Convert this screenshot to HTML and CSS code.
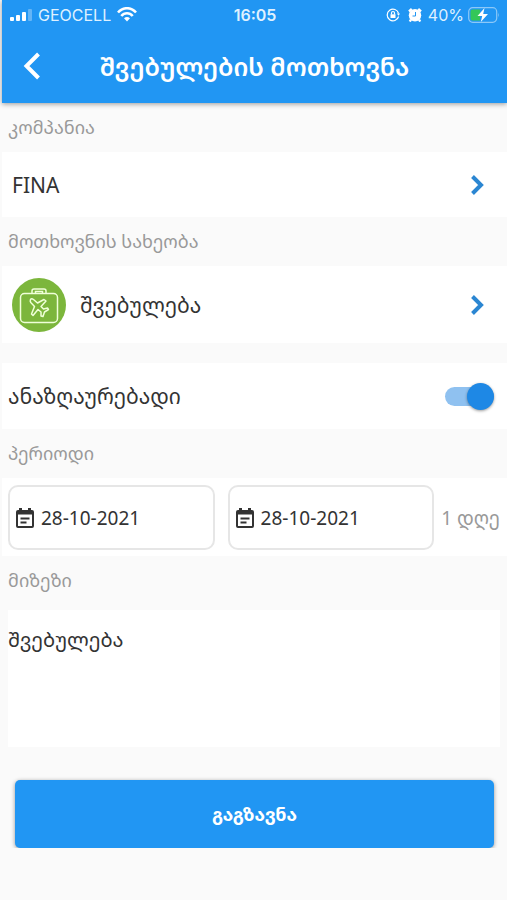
FILE: index.html
```html
<!DOCTYPE html>
<html lang="ka">
<head>
    <meta charset="UTF-8">
    <meta name="viewport" content="width=device-width, initial-scale=1.0">
    <title>შვებულების მოთხოვნა</title>
    <link rel="stylesheet" href="styles.css">
</head>
<body>
    <header>
        <div class="status-bar">
            <div class="status-left">
                <svg width="22" height="14" viewBox="0 0 22 14" fill="#fff">
                    <rect x="0" y="9" width="4" height="4" rx="1"/>
                    <rect x="6" y="7" width="4" height="6" rx="1"/>
                    <rect x="12" y="4" width="4" height="9" rx="1"/>
                    <rect x="18" y="1" width="4" height="12" rx="1" opacity="0.3"/>
                </svg>
                <span>GEOCELL</span>
                <svg width="20" height="15" viewBox="0 0 20 15" fill="none" stroke="#fff" stroke-width="2.6">
                    <path d="M1 5.5C6-.2 14-.2 19 5.5"/>
                    <path d="M4.3 9C7.5 5.3 12.5 5.3 15.7 9"/>
                    <path d="M10 14.5L7 11.3Q10 8.5 13 11.3z" fill="#fff" stroke="none"/>
                </svg>
            </div>
            <span class="status-time">16:05</span>
            <div class="status-right">
                <svg width="14" height="14" viewBox="0 0 14 14" fill="none" stroke="#fff" stroke-width="1.2">
                    <path d="M12.6 8.5A5.8 5.8 0 1 1 12.6 5.5"/>
                    <path d="M10.8 5.5h3.2l-1.4 2.3z" fill="#fff" stroke="none"/>
                    <rect x="4.5" y="6.3" width="5" height="3.7" fill="#fff" stroke="none"/>
                    <path d="M5.5 6.5V5a1.5 1.5 0 0 1 3 0v1.5"/>
                </svg>
                <svg class="alarm" width="14" height="14" viewBox="0 0 14 14">
                    <path d="M1 3.5L3.8 1M13 3.5L10.2 1M3 11.5L1.8 13.5M11 11.5l1.2 2" stroke="#fff" stroke-width="2.4"/>
                    <circle cx="7" cy="7.3" r="6.2" fill="#fff"/>
                    <path d="M7.5 4v4H4.5" fill="none" stroke="#2196f3" stroke-width="1"/>
                </svg>
                <span>40%</span>
                <svg width="32" height="16" viewBox="0 0 32 16">
                    <rect x="0.7" y="0.7" width="28" height="14.6" rx="4" fill="none" stroke="#8cc8f8" stroke-width="1.2"/>
                    <path d="M30.3 5.5q1.5 2.5 0 5z" fill="#8cc8f8"/>
                    <path d="M4.5 2.5H12v11H4.5a2 2 0 0 1-2-2v-7a2 2 0 0 1 2-2z" fill="#34c759"/>
                    <path d="M16.5 1L9.5 9h4.7l-1.4 6 7.2-8h-4.8z" fill="#fff"/>
                </svg>
            </div>
        </div>
        <div class="title-bar">
            <button type="button" class="back-btn" aria-label="უკან">
                <svg width="18" height="28" viewBox="0 0 18 28" fill="none" stroke="#fff" stroke-width="4">
                    <path d="M15.500 2L3.500 14l12 12"/>
                </svg>
            </button>
            <h1>შვებულების მოთხოვნა</h1>
        </div>
    </header>
    <main>
        <form>
            <h2 id="company-label">კომპანია</h2>
            <button type="button" class="row company" aria-describedby="company-label">
                <span class="row-text">FINA</span>
                <svg class="chevron" width="14" height="20" viewBox="0 0 14 20"><path d="M1.500 1.500L10 10l-8.500 8.500"/></svg>
            </button>

            <h2 id="type-label">მოთხოვნის სახეობა</h2>
            <button type="button" class="row type" aria-describedby="type-label">
                <svg width="54" height="54" viewBox="0 0 54 54" fill="none" stroke="#efffd8" stroke-width="1.5">
                    <circle cx="27" cy="27" r="27" fill="#7cb63c" stroke="none"/>
                    <rect x="8.5" y="15.5" width="37" height="29" rx="4"/>
                    <path d="M20 15.5V13q0-2 2-2h10q2 0 2 2v2.5M23.5 15.500v-2h7v2"/>
                    <path d="M18.500 21.500Q19.500 20 21.500 21.500L25.500 25L32 21.500L34 23L29 28.500L31.500 31L35.500 30L36.500 31.500L32.500 34L31 38.500L29 38L29 34L26 31.500L21 37.500L19.500 36L22.500 28.500L18.800 24.500Q17.800 23 18.500 21.500z" stroke-linejoin="round"/>
                </svg>
                <span class="row-text">შვებულება</span>
                <svg class="chevron" width="14" height="20" viewBox="0 0 14 20"><path d="M1.500 1.500L10 10l-8.500 8.500"/></svg>
            </button>

            <div class="row paid">
                <label for="paid">ანაზღაურებადი</label>
                <input type="checkbox" role="switch" id="paid" class="switch" checked>
            </div>

            <h2>პერიოდი</h2>
            <div class="period">
                <label class="date-field">
                    <svg width="18" height="20" viewBox="0 0 18 20" fill="none" stroke="#333" stroke-width="2">
                        <rect x="1" y="3" width="16" height="16" rx="1"/>
                        <path d="M1 5h16M4.500 0v4M13.500 0v4" stroke-width="3"/>
                        <path d="M4.500 10.500h9M4.500 14.500h6"/>
                    </svg>
                    <input type="text" value="28-10-2021" aria-label="დაწყება">
                </label>
                <label class="date-field">
                    <svg width="18" height="20" viewBox="0 0 18 20" fill="none" stroke="#333" stroke-width="2">
                        <rect x="1" y="3" width="16" height="16" rx="1"/>
                        <path d="M1 5h16M4.500 0v4M13.500 0v4" stroke-width="3"/>
                        <path d="M4.500 10.500h9M4.500 14.500h6"/>
                    </svg>
                    <input type="text" value="28-10-2021" aria-label="დასრულება">
                </label>
                <span class="days">1 დღე</span>
            </div>

            <h2><label for="reason">მიზეზი</label></h2>
            <textarea id="reason" rows="4">შვებულება</textarea>

            <button type="submit" class="submit-btn">გაგზავნა</button>
        </form>
    </main>
</body>
</html>
```
FILE: styles.css
```css
* {
    box-sizing: border-box;
}
body {
    font-family: "Noto Sans", "Noto Sans Georgian", "DejaVu Sans", sans-serif;
    background-color: #fafafa;
    margin: 0;
    padding-left: 2px;
    color: #333;
    font-size: 20px;
}
button, input, textarea {
    font: inherit;
    color: inherit;
    border: none;
    margin: 0;
    padding: 0;
}
button {
    cursor: pointer;
}
svg {
    flex: none;
}
header {
    position: relative;
    background-color: #2196f3;
    color: white;
    box-shadow: 0 1px 5px rgba(0, 0, 0, 0.4);
}
.status-bar {
    display: grid;
    grid-template-columns: 1fr auto 1fr;
    align-items: center;
    height: 29px;
    padding: 0 7px 0 8px;
    font-family: Inter, sans-serif;
    font-size: 16px;
    color: #dff1ff;
}
.status-left, .status-right {
    display: flex;
    align-items: center;
    gap: 6px;
}
.status-right {
    justify-content: flex-end;
    gap: 4px;
}
.alarm {
    margin: 0 2px 0 4px;
}
.status-time {
    font-weight: 600;
}
.title-bar {
    display: grid;
    grid-template-columns: 60px 1fr 60px;
    align-items: center;
    height: 74px;
}
.back-btn {
    display: flex;
    justify-content: center;
    background: none;
}
h1 {
    margin: 0;
    font-size: 25px;
    font-weight: 600;
    text-align: center;
    white-space: nowrap;
}
h2 {
    margin: 0;
    padding: 0 6px;
    font-size: 18px;
    font-weight: normal;
    line-height: 49px;
    color: #999;
}
.row {
    display: flex;
    align-items: center;
    gap: 14px;
    width: 100%;
    background-color: white;
    padding: 0 22px 0 10px;
    font-size: 21px;
    text-align: left;
}
.row-text {
    flex: 1;
}
.chevron {
    fill: none;
    stroke: #2b86d2;
    stroke-width: 4;
}
.company {
    height: 65px;
}
.type {
    height: 77px;
}
.paid {
    justify-content: space-between;
    height: 66px;
    margin-top: 20px;
    padding: 0 13px 0 6px;
}
.switch {
    appearance: none;
    display: flex;
    align-items: center;
    justify-content: flex-end;
    width: 49px;
    height: 19px;
    border-radius: 10px;
    background-color: #8fc1f0;
}
.switch::before {
    content: "";
    width: 27px;
    height: 27px;
    border-radius: 50%;
    background-color: #1e88e5;
    box-shadow: 0 1px 3px rgba(0, 0, 0, 0.4);
}
.switch:not(:checked) {
    justify-content: flex-start;
}
.period {
    display: flex;
    align-items: center;
    gap: 13px;
    background-color: white;
    padding: 7px 7px 6px 6px;
}
.date-field {
    display: flex;
    flex: 1;
    align-items: center;
    gap: 7px;
    min-width: 0;
    height: 65px;
    padding: 0 6px;
    border: 2px solid #e6e6e6;
    border-radius: 10px;
    font-size: 19px;
}
.date-field input {
    width: 100%;
    min-width: 0;
    background: none;
}
.days {
    margin-left: -6px;
    font-size: 19px;
    color: #999;
}
textarea {
    display: block;
    width: calc(100% - 13px);
    height: 137px;
    margin: 5px 7px 33px 6px;
    padding-top: 16px;
    background-color: white;
    resize: none;
    outline: none;
}
.submit-btn {
    display: block;
    width: calc(100% - 26px);
    height: 68px;
    margin: 0 13px;
    border-radius: 5px;
    background-color: #2196f3;
    color: white;
    font-size: 18px;
    font-weight: bold;
    box-shadow: 0 1px 4px rgba(0, 0, 0, 0.4);
}
```
